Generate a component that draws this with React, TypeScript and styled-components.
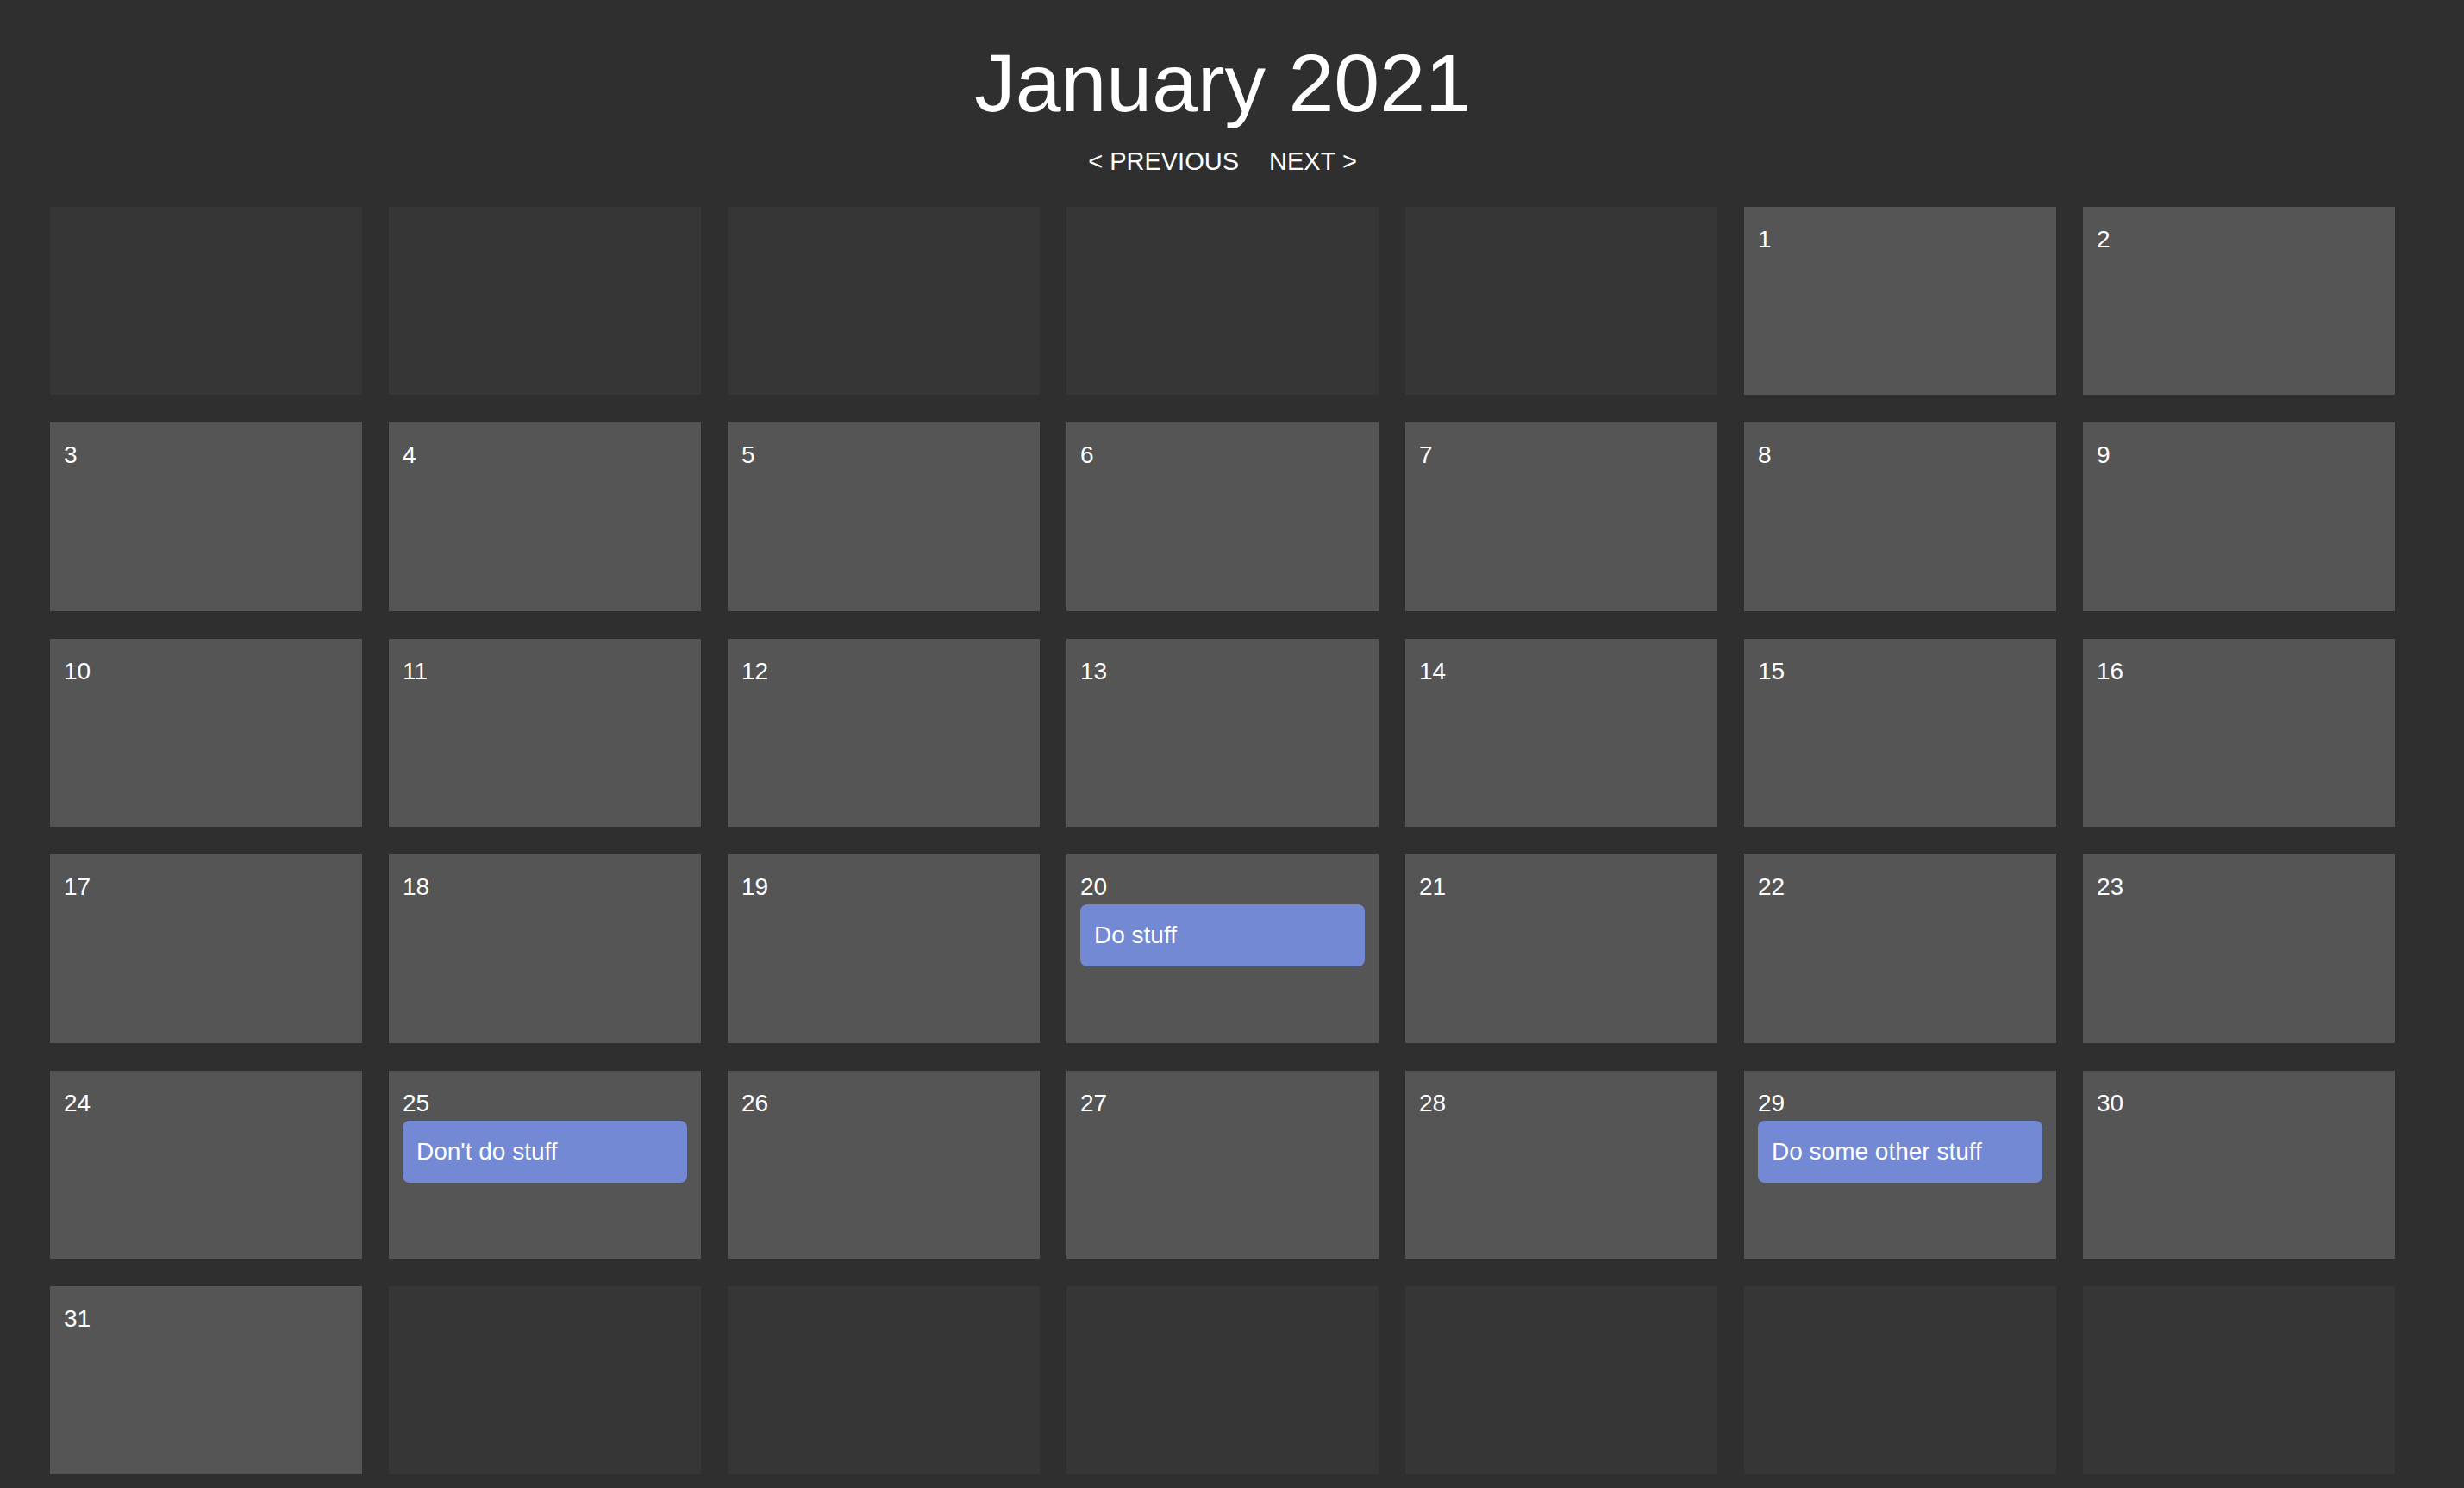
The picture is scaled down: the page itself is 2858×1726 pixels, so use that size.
import React, { useState } from "react";
import styled, { createGlobalStyle } from "styled-components";

const GlobalStyle = createGlobalStyle`
  html, body {
    margin: 0;
    padding: 0;
    background: #2f2f2f;
  }
  body {
    font-family: "Liberation Sans", Arial, Helvetica, sans-serif;
    color: #ffffff;
  }
`;

const Page = styled.div`
  width: 2720px;
  margin-left: 58px;
  padding-top: 48px;
  padding-bottom: 18px;
  display: flex;
  flex-direction: column;
  align-items: center;
`;

const Title = styled.h1`
  margin: 0;
  font-size: 95px;
  line-height: 96px;
  font-weight: 400;
  color: #ffffff;
`;

const Nav = styled.div`
  margin-top: 29px;
  display: flex;
  gap: 35px;
`;

const NavButton = styled.button`
  background: none;
  border: none;
  padding: 0;
  margin: 0;
  color: #ffffff;
  font-family: inherit;
  font-size: 29px;
  line-height: 28px;
  cursor: pointer;
`;

const Grid = styled.div`
  margin-top: 39px;
  width: 100%;
  display: grid;
  grid-template-columns: repeat(7, 1fr);
  grid-auto-rows: 218.4px;
  column-gap: 31px;
  row-gap: 32px;
`;

const Cell = styled.div<{ $empty?: boolean }>`
  background: ${(p) => (p.$empty ? "#363636" : "#555555")};
  padding: 16px;
  box-sizing: border-box;
  display: flex;
  flex-direction: column;
  min-width: 0;
`;

const DayNumber = styled.div`
  font-size: 28px;
  line-height: 40px;
  padding-top: 2px;
  color: #ffffff;
`;

const Event = styled.div`
  height: 72px;
  box-sizing: border-box;
  padding: 0 16px;
  display: flex;
  align-items: center;
  background: #7389d4;
  border-radius: 8px;
  font-size: 28px;
  color: #ffffff;
  white-space: nowrap;
  overflow: hidden;
`;

const MONTHS = [
  "January", "February", "March", "April", "May", "June",
  "July", "August", "September", "October", "November", "December",
];

// events keyed by "year-month-day"
const EVENTS: Record<string, string[]> = {
  "2021-0-20": ["Do stuff"],
  "2021-0-25": ["Don't do stuff"],
  "2021-0-29": ["Do some other stuff"],
};

const App: React.FC = () => {
  const [year, setYear] = useState(2021);
  const [month, setMonth] = useState(0);

  const firstDay = new Date(year, month, 1).getDay();
  const daysInMonth = new Date(year, month + 1, 0).getDate();

  const cells: (number | null)[] = [];
  for (let i = 0; i < 42; i++) {
    const day = i - firstDay + 1;
    cells.push(day >= 1 && day <= daysInMonth ? day : null);
  }

  const prev = () => {
    if (month === 0) {
      setMonth(11);
      setYear(year - 1);
    } else setMonth(month - 1);
  };
  const next = () => {
    if (month === 11) {
      setMonth(0);
      setYear(year + 1);
    } else setMonth(month + 1);
  };

  return (
    <>
      <GlobalStyle />
      <Page>
        <Title>
          {MONTHS[month]} {year}
        </Title>
        <Nav>
          <NavButton onClick={prev}>&lt; PREVIOUS</NavButton>
          <NavButton onClick={next}>NEXT &gt;</NavButton>
        </Nav>
        <Grid>
          {cells.map((day, i) =>
            day === null ? (
              <Cell key={i} $empty />
            ) : (
              <Cell key={i}>
                <DayNumber>{day}</DayNumber>
                {(EVENTS[`${year}-${month}-${day}`] || []).map((e) => (
                  <Event key={e}>{e}</Event>
                ))}
              </Cell>
            )
          )}
        </Grid>
      </Page>
    </>
  );
};

export default App;
